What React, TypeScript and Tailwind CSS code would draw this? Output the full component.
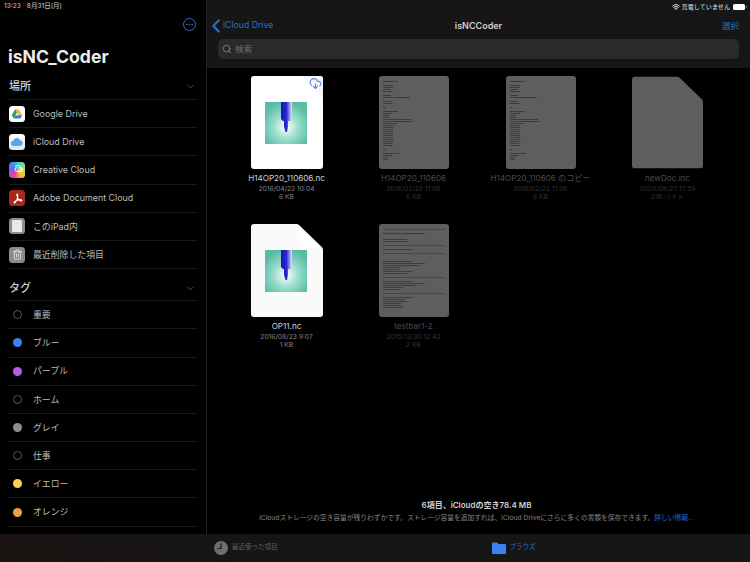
import { ChevronDown, ChevronLeft, CloudDownload, Ellipsis, Search, Trash2, Wifi } from "lucide-react"
import type { ReactNode } from "react"

const font = "[font-family:Inter,'Noto_Sans_CJK_JP',sans-serif]"

function Row({ icon, label }: { icon: ReactNode; label: string }) {
  return (
    <div className="flex h-[28.2px] items-center border-b border-[#1a1a1a]">
      <div className="flex w-[16px] justify-center">{icon}</div>
      <span className="pl-[8px] text-[8.9px] text-[#bdbdbd]">{label}</span>
    </div>
  )
}

function AppIcon({ className, children }: { className: string; children?: ReactNode }) {
  return <div className={`flex h-4 w-4 shrink-0 items-center justify-center overflow-hidden rounded-[3.5px] ${className}`}>{children}</div>
}

function Dot({ color }: { color?: string }) {
  if (!color) return <div className="h-[9px] w-[9px] rounded-full border border-[#5a5a5a]" />
  return <div className={`h-[9px] w-[9px] rounded-full ${color}`} />
}

function SectionHead({ label }: { label: string }) {
  return (
    <div className="flex items-center justify-between border-b border-[#1a1a1a] pr-[1px]">
      <span className="text-[11px] font-medium text-[#d0d0d0]">{label}</span>
      <ChevronDown size={11} className="text-[#555]" />
    </div>
  )
}

function Sidebar() {
  return (
    <aside className="flex w-[207px] shrink-0 flex-col border-r border-[#222] bg-black px-[9px]">
      <div className="-ml-[5px] flex h-[14px] items-center text-[6.5px] font-medium text-[#bbb]">
        <span>13:23</span>
        <span className="ml-[6px]">8月31日(月)</span>
      </div>
      <div className="mt-[4px] flex justify-end pr-[1px]">
        <div className="flex h-[13px] w-[13px] items-center justify-center rounded-full border border-[#2f6fd8]">
          <Ellipsis size={9} className="text-[#2f6fd8]" />
        </div>
      </div>
      <h1 className="mt-[14px] -ml-[1px] text-[17.6px] font-bold leading-[24px] text-[#ececec]">isNC_Coder</h1>
      <div className="mt-[10px] [&>div]:h-[21px] [&>div]:pb-[5px]">
        <SectionHead label="場所" />
      </div>
      <Row label="Google Drive" icon={
        <AppIcon className="bg-white">
          <svg viewBox="0 0 16 16" className="h-3 w-3">
            <path d="M5.5 1.500h5l4.500 8h-5z" fill="#f4c02c" />
            <path d="M5.500 1.500 1 9.500l2.500 4.500 4.500-8z" fill="#2ea44f" />
            <path d="M3.500 14h9l2.500-4.500H6z" fill="#3b7de8" />
          </svg>
        </AppIcon>
      } />
      <Row label="iCloud Drive" icon={
        <AppIcon className="bg-gradient-to-b from-white to-[#dbe8f6]">
          <svg viewBox="0 0 16 16" className="h-[14px] w-[14px]">
            <path d="M4 12.500a2.800 2.800 0 0 1-.4-5.600A4.200 4.200 0 0 1 11.600 6a3.300 3.300 0 0 1 .4 6.500z" fill="#5aa6ea" />
          </svg>
        </AppIcon>
      } />
      <Row label="Creative Cloud" icon={
        <AppIcon className="bg-[conic-gradient(from_200deg,#f5447c,#a34be8,#3d8ef0,#3fd6c8,#b8e04a,#f7c531,#f5447c)]">
          <svg viewBox="0 0 16 16" className="h-[13px] w-[13px]" fill="none" stroke="#fff" strokeWidth="1.200">
            <path d="M7.500 5.500a2.500 2.500 0 1 0 0 5h4.200a2.400 2.400 0 0 0 .2-4.800A3.800 3.800 0 0 0 5 4.600" />
            <path d="M10 5.500a2.500 2.500 0 1 1 0 5" />
          </svg>
        </AppIcon>
      } />
      <Row label="Adobe Document Cloud" icon={
        <AppIcon className="bg-[#a9281b]">
          <svg viewBox="0 0 16 16" className="h-[13px] w-[13px]" fill="none" stroke="#fff" strokeWidth="1.300">
            <path d="M7.600 2.500c-.8 0-.6 2.400 1 5.200 1.200 2 3.200 3.600 4.400 3 .7-.4 0-1.400-2-1.300-2.600.2-5.600 1.300-7 3-.8 1.100 0 1.600 1 .8C7 11.300 8.800 6 8.300 3.300c-.1-.5-.3-.8-.7-.8z" />
          </svg>
        </AppIcon>
      } />
      <Row label="このiPad内" icon={
        <AppIcon className="bg-[#8e8e8e]">
          <div className="h-[12px] w-[10px] rounded-[1px] bg-[#e8e8ee]" />
        </AppIcon>
      } />
      <Row label="最近削除した項目" icon={
        <AppIcon className="bg-[#8a8a8a]">
          <Trash2 size={11} className="text-[#e4e4e4]" />
        </AppIcon>
      } />
      <div className="mt-[12px] [&>div]:h-[20px] [&>div]:pb-[5px]">
        <SectionHead label="タグ" />
      </div>
      <Row label="重要" icon={<Dot />} />
      <Row label="ブルー" icon={<Dot color="bg-[#3b82f6]" />} />
      <Row label="パープル" icon={<Dot color="bg-[#b05fe6]" />} />
      <Row label="ホーム" icon={<Dot />} />
      <Row label="グレイ" icon={<Dot color="bg-[#8e8e8e]" />} />
      <Row label="仕事" icon={<Dot />} />
      <Row label="イエロー" icon={<Dot color="bg-[#fbd24e]" />} />
      <Row label="オレンジ" icon={<Dot color="bg-[#f0a23c]" />} />
    </aside>
  )
}

function NcThumb({ fold }: { fold?: boolean }) {
  return (
    <svg viewBox="0 0 72 93" className="block h-[93px] w-[72px]">
      <defs>
        <radialGradient id="glow" cx="0.5" cy="0.6" r="0.6">
          <stop offset="0" stopColor="#ffffff" />
          <stop offset="0.5" stopColor="#98dccb" />
          <stop offset="1" stopColor="#5abca6" />
        </radialGradient>
        <linearGradient id="barrel" x1="0" x2="1" y1="0" y2="0">
          <stop offset="0" stopColor="#1414c0" />
          <stop offset="0.5" stopColor="#2a2ad0" />
          <stop offset="1" stopColor="#e6e6f8" />
        </linearGradient>
      </defs>
      {fold ? (
        <>
          <path d="M3 0h42.500q1.500 0 2.800 1.200L70.800 23q1.200 1.200 1.200 3V90a3 3 0 0 1-3 3H3a3 3 0 0 1-3-3V3a3 3 0 0 1 3-3z" fill="#fafafa" />
          <path d="M48 2v15q0 6 6 7h16" fill="#ffffff" stroke="#f0f0f0" strokeWidth="0.5" />
        </>
      ) : (
        <>
          <rect width="72" height="93" rx="3" fill="#ffffff" />
          <path d="M50 0h19a3 3 0 0 1 3 3v19z" fill="#f6f6f6" />
        </>
      )}
      <rect x="14" y="26" width="42" height="42" fill="url(#glow)" />
      <path d="M30 26H41V43L39 45H37V51L36 56H34.500L33 51V45H32L30 43z" fill="url(#barrel)" />
    </svg>
  )
}

// widths of the tiny text lines, 2px pitch
const codeLines = [
  0, 15, 0, 10, 10, 8, 10, 0, 8, 27, 0, 8, 10, 0, 3, 0, 15, 10, 6, 6, 28, 30, 14, 10, 10, 10, 10, 10, 10, 10, 10, 11, 9, 10, 0, 3, 0, 16, 9, 5, 5,
]

function TextThumb() {
  return (
    <div className="h-[93px] w-[70px] overflow-hidden rounded-[3px] bg-[#5e5e5e] pl-[4px] pt-[3px]">
      {codeLines.map((w, i) => (
        <div key={i} className="flex h-[2px] items-start">
          <div style={{ width: w }} className="h-[1px] bg-[#3d3d3d]" />
        </div>
      ))}
    </div>
  )
}

// -1 marks a full width rule
const testLines = [
  0, -1, 0, 42, 0, 0, 24, 26, 0, -1, 0, 30, 0, -1, 0, 0, 0, 30, 42, 36, 18, 16, 30, 24, 0, -1, 0, 30, 42, 34, 20, 18, 0, -1, 0, 30, 22, 24, 18, 18, 20,
]

function WideThumb() {
  return (
    <div className="h-[93px] w-[70px] overflow-hidden rounded-[3px] bg-[#5e5e5e] px-[4px] pt-[3px]">
      {testLines.map((w, i) => (
        <div key={i} className="flex h-[2px] items-start">
          <div style={{ width: w === -1 ? "100%" : w }} className={`h-[1px] ${w === -1 ? "bg-[#484848]" : "bg-[#3d3d3d]"}`} />
        </div>
      ))}
    </div>
  )
}

function GrayFold() {
  return (
    <svg viewBox="0 0 72 93" className="block h-[93px] w-[71px]">
      <path d="M3 0h42.500q1.500 0 2.800 1.200L70.800 23q1.200 1.200 1.200 3V90a3 3 0 0 1-3 3H3a3 3 0 0 1-3-3V3a3 3 0 0 1 3-3z" fill="#5e5e5e" />
    </svg>
  )
}

function Tile({ thumb, name, date, size, dim, badge }: { thumb: ReactNode; name: string; date: string; size: string; dim?: boolean; badge?: ReactNode }) {
  return (
    <div className="flex flex-col items-center">
      <div className="relative">
        {thumb}
        {badge}
      </div>
      <div className={`mt-[3px] whitespace-nowrap text-[8.1px] leading-[13px] ${dim ? "text-[#4a4a4a]" : "text-[#d0d0d0]"}`}>{name}</div>
      <div className={`whitespace-nowrap text-[6.7px] leading-[8px] ${dim ? "text-[#333]" : "text-[#858585]"}`}>{date}</div>
      <div className={`whitespace-nowrap text-[6.7px] leading-[8px] ${dim ? "text-[#333]" : "text-[#858585]"}`}>{size}</div>
    </div>
  )
}

function Main() {
  return (
    <main className="flex min-w-0 flex-1 flex-col bg-black">
      <header className="h-[68px] shrink-0 bg-[#161616] px-[11px]">
        <div className="-mr-[8px] flex h-[13px] items-center justify-end gap-[2px] text-[6.1px] font-medium text-[#ccc]">
          <Wifi size={8} strokeWidth={3} className="text-[#ddd]" />
          <span>充電していません</span>
          <div className="ml-[1px] h-[6px] w-[12px] rounded-[1.5px] bg-white" />
          <div className="-ml-[1px] h-[2px] w-[1px] bg-[#777]" />
        </div>
        <div className="relative mt-[3px] flex h-[20px] items-center justify-between">
          <div className="-ml-[13px] flex items-center text-[#2a6ccc]">
            <ChevronLeft size={22} strokeWidth={2.4} className="-mr-[4px]" />
            <span className="text-[8.7px]">iCloud Drive</span>
          </div>
          <span className="absolute left-1/2 -translate-x-1/2 text-[9px] font-semibold text-[#d0d0d0]">isNCCoder</span>
          <span className="text-[8.5px] text-[#2a6ccc]">選択</span>
        </div>
        <div className="mt-[3px] flex h-[20px] items-center gap-[3px] rounded-[5px] bg-[#2a2a2a] px-[4px]">
          <Search size={10} className="text-[#8a8a8a]" />
          <span className="text-[8.5px] text-[#6e6e6e]">検索</span>
        </div>
      </header>
      <div className="grid flex-1 grid-cols-[repeat(4,127px)] content-start gap-y-[23px] pl-[16px] pt-[8px]">
        <Tile thumb={<NcThumb />} name="H14OP20_110606.nc" date="2016/04/22 10:04" size="6 KB"
          badge={<CloudDownload size={13} className="absolute right-[1px] top-[1px] text-[#4a8fe8]" />} />
        <Tile dim thumb={<TextThumb />} name="H14OP20_110606" date="2016/02/22 11:06" size="6 KB" />
        <Tile dim thumb={<TextThumb />} name="H14OP20_110606 のコピー" date="2016/02/22 11:06" size="6 KB" />
        <Tile dim thumb={<GrayFold />} name="newDoc.inc" date="2020/08/27 17:59" size="218 バイト" />
        <Tile thumb={<NcThumb fold />} name="OP11.nc" date="2016/08/23 9:07" size="1 KB" />
        <Tile dim thumb={<WideThumb />} name="testbar1-2" date="2015/12/30 12:42" size="2 KB" />
      </div>
      <div className="mb-[5px] flex h-[30px] shrink-0 flex-col items-center pr-[4px]">
        <div className="text-[8px] font-semibold leading-[12px] text-[#d0d0d0]">6項目、iCloudの空き78.4 MB</div>
        <div className="mt-[2px] whitespace-nowrap text-[6.75px] leading-[10px] text-[#858585]">
          iCloudストレージの空き容量が残りわずかです。ストレージ容量を追加すれば、iCloud Driveにさらに多くの書類を保存できます。
          <span className="text-[#2a6ccc]">詳しい情報...</span>
        </div>
      </div>
    </main>
  )
}

function TabBar() {
  return (
    <footer className="flex h-[28px] shrink-0 items-center bg-[linear-gradient(90deg,#1b1413,#161616_35%)]">
      <div className="ml-[214px] flex items-center">
        <svg viewBox="0 0 14 14" className="h-[14px] w-[14px]">
          <circle cx="7" cy="7" r="7" fill="#6e6e6e" />
          <path d="M7 2.500V7.500H3.500" stroke="#1a1a1a" strokeWidth="1.200" fill="none" />
        </svg>
        <span className="ml-[4px] text-[6.5px] text-[#5f5f5f]">最近使った項目</span>
      </div>
      <div className="ml-[214px] flex items-center">
        <svg viewBox="0 0 14 12" className="h-[12px] w-[14px]">
          <path d="M0 1.500A1 1 0 0 1 1 .5h4l1.500 1.500H13a1 1 0 0 1 1 1V11a1 1 0 0 1-1 1H1a1 1 0 0 1-1-1z" fill="#3b82f0" />
        </svg>
        <span className="ml-[4px] text-[6.5px] text-[#2a6ccc]">ブラウズ</span>
      </div>
    </footer>
  )
}

export default function App() {
  return (
    <div className={`flex h-[562px] w-[750px] flex-col overflow-hidden bg-black ${font}`}>
      <div className="flex min-h-0 flex-1">
        <Sidebar />
        <Main />
      </div>
      <TabBar />
    </div>
  )
}
